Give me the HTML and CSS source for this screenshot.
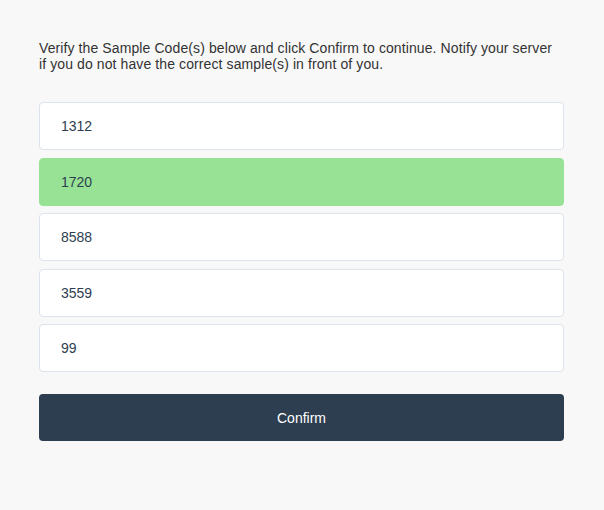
FILE: index.html
```html
<!DOCTYPE html>
<html>
<head>
<meta charset="utf-8">
<link rel="stylesheet" href="styles.css">
</head>
<body>
<div class="page">
  <p class="intro">Verify the Sample Code(s) below and click Confirm to continue. Notify your server if you do not have the correct sample(s) in front of you.</p>
  <div class="list">
    <div class="item">1312</div>
    <div class="item selected">1720</div>
    <div class="item">8588</div>
    <div class="item">3559</div>
    <div class="item">99</div>
  </div>
  <button class="confirm">Confirm</button>
</div>
</body>
</html>
```
FILE: styles.css
```css
html, body {
  margin: 0;
  padding: 0;
  background: #f8f8f8;
}
body {
  font-family: "Liberation Sans", Arial, sans-serif;
  color: #2d3e50;
}
.page {
  width: 525px;
  padding: 40px 0 0 39px;
}
.intro {
  margin: 0;
  width: 520px;
  font-size: 14px;
  line-height: 16px;
  letter-spacing: 0.1px;
  color: #333;
}
.list {
  margin-top: 30px;
  display: flex;
  flex-direction: column;
  gap: 7.5px;
}
.item {
  box-sizing: border-box;
  height: 48px;
  display: flex;
  align-items: center;
  padding-left: 21px;
  background: #fff;
  border: 1px solid #dde3ea;
  border-radius: 4px;
  font-size: 14px;
  color: #2d3e50;
}
.item.selected {
  background: #98e296;
  border-color: #98e296;
}
.confirm {
  display: block;
  margin-top: 22px;
  width: 525px;
  height: 47px;
  border: none;
  border-radius: 4px;
  background: #2d3e50;
  color: #fff;
  font-family: "Liberation Sans", Arial, sans-serif;
  font-size: 14px;
  padding: 0;
}
```
